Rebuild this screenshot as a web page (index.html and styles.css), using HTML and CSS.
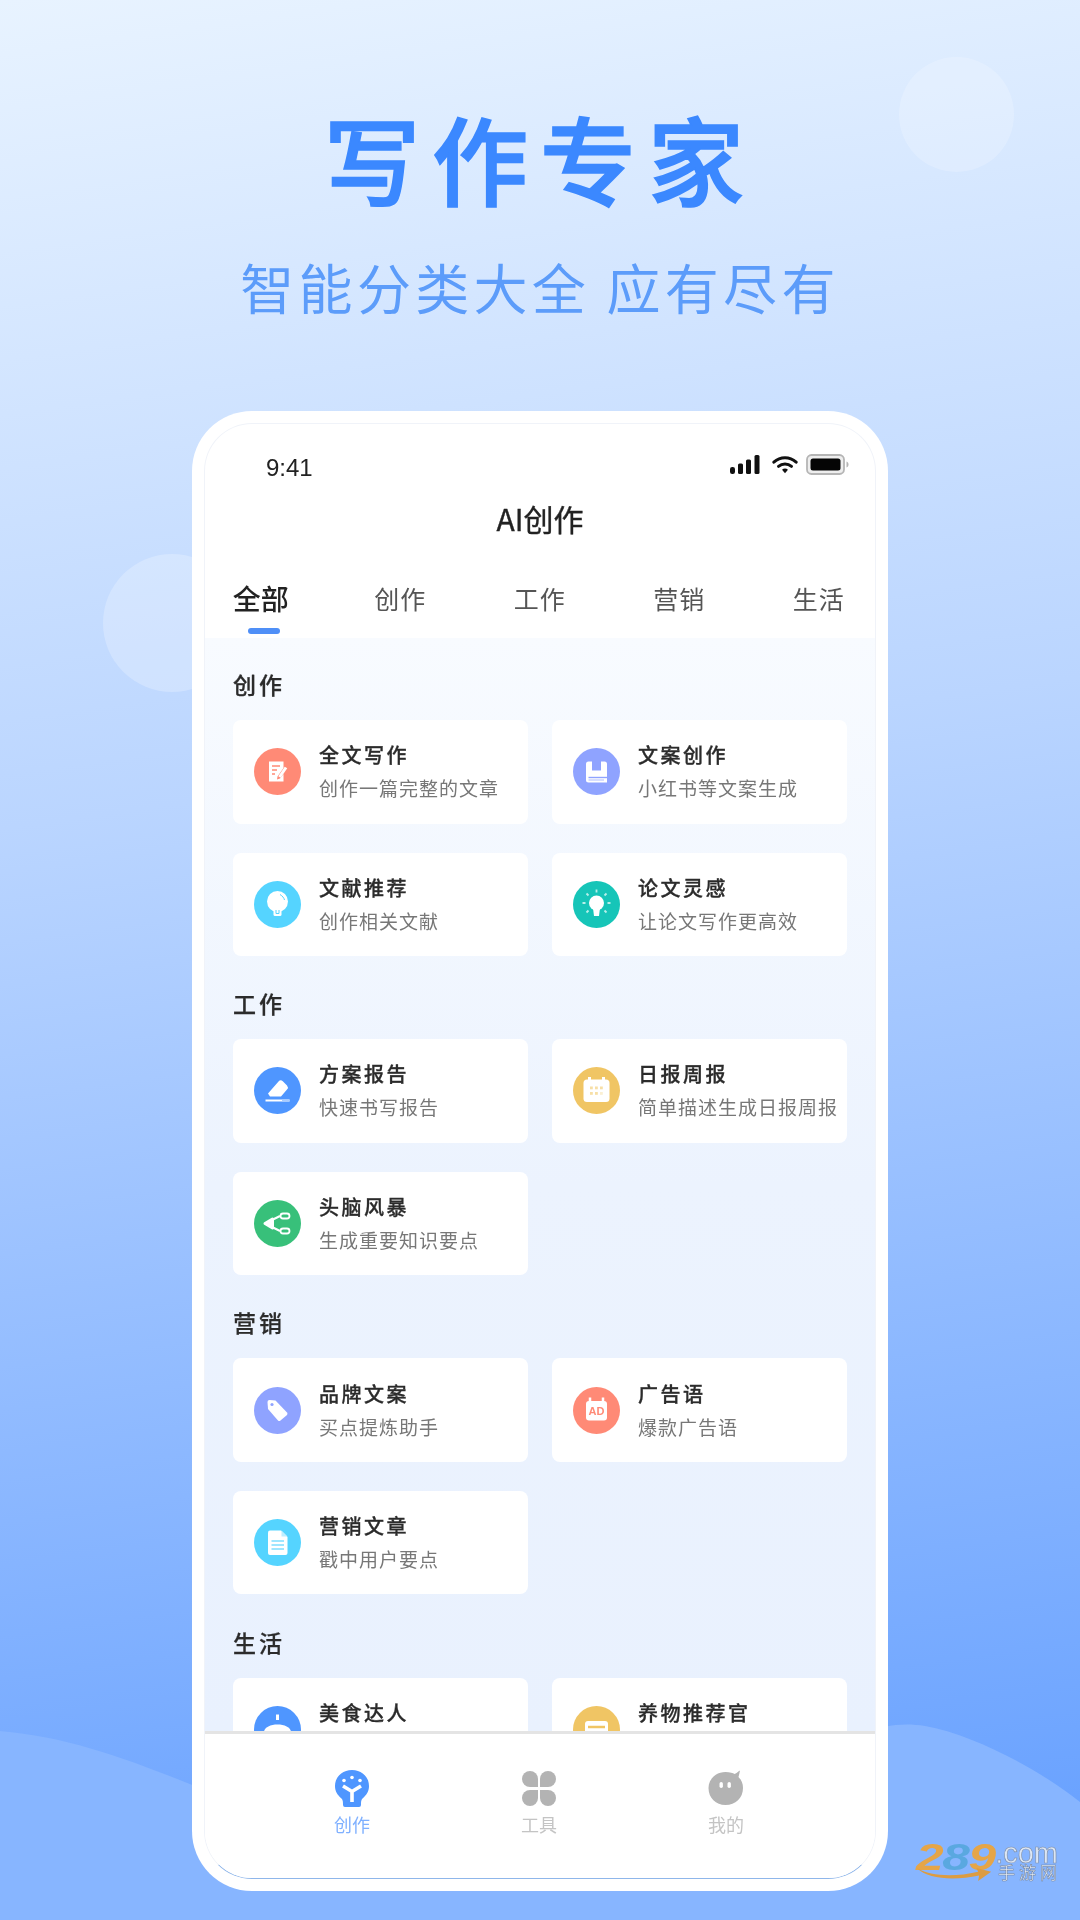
FILE: index.html
```html
<!DOCTYPE html>
<html lang="zh-CN">
<head>
<meta charset="utf-8">
<title>写作专家</title>
<link rel="stylesheet" href="styles.css">
</head>
<body>
<div class="page">
  <div class="blob blob-top"></div>
  <div class="blob blob-left"></div>
  <svg class="waves" viewBox="0 0 1080 200" aria-hidden="true">
    <path d="M0 11C70 17 130 40 200 68C400 130 700 110 860 15C885 4 905 3 925 6C975 15 1040 50 1080 82V200H0Z"/>
  </svg>

  <header class="hero">
    <h1 class="hero-title">写作专家</h1>
    <p class="hero-sub">智能分类大全 应有尽有</p>
  </header>

  <div class="phone">
    <div class="screen">
      <div class="status">
        <span class="clock">9:41</span>
        <div class="status-icons">
          <svg class="i-signal" viewBox="0 0 30 19"><rect x="0" y="12" width="5" height="7" rx="2.2"/><rect x="8" y="8.5" width="5" height="10.5" rx="1.5"/><rect x="16" y="4.5" width="5" height="14.5" rx="1.5"/><rect x="24.500" y="0" width="5" height="19" rx="1.5"/></svg>
          <svg class="i-wifi" viewBox="0 0 28 20"><path d="M2 7.500C9 1 19 1 26 7.500" fill="none" stroke="#111" stroke-width="3.200" stroke-linecap="round"/><path d="M7 12C11 8.500 17 8.500 21 12" fill="none" stroke="#111" stroke-width="3.200" stroke-linecap="round"/><path d="M10.800 15.600C12.700 14 15.300 14 17.200 15.600L14 19.400Z" fill="#111"/></svg>
          <svg class="i-battery" viewBox="0 0 43 21"><rect x="1" y="1" width="37" height="19" rx="4.500" fill="#eee" stroke="#b5b5b5" stroke-width="1.800"/><rect x="4.500" y="4.500" width="30" height="12" rx="2.500" fill="#050505"/><path d="M40.500 7.500C42 8 42.500 9.200 42.500 10.500C42.500 11.800 42 13 40.500 13.500Z" fill="#b5b5b5"/></svg>
        </div>
      </div>
      <div class="app-title">AI创作</div>
      <nav class="tabs">
        <div class="tab tab-active"><span>全部</span><i class="tab-bar"></i></div>
        <div class="tab"><span>创作</span></div>
        <div class="tab"><span>工作</span></div>
        <div class="tab"><span>营销</span></div>
        <div class="tab"><span>生活</span></div>
      </nav>

      <main class="list">
        <section class="group">
          <h2 class="group-title">创作</h2>
          <div class="cards">
            <article class="card">
              <svg class="ico" viewBox="0 0 47 47"><circle cx="23.500" cy="23.500" r="23.500" fill="#ff8a76"/><path d="M15 13.500H29.500V20L23.500 28.500L23 31.500L26 30.500L29.500 26V33.500H15Z" fill="#fff"/><path d="M18 18H26M18 22H23M18 26H21" stroke="#ff8a76" stroke-width="1.600"/><path d="M25.500 29L32 19.500" stroke="#fff" stroke-width="3"/></svg>
              <div class="card-text"><h3 class="card-title">全文写作</h3><p class="card-sub">创作一篇完整的文章</p></div>
            </article>
            <article class="card">
              <svg class="ico" viewBox="0 0 47 47"><circle cx="23.500" cy="23.500" r="23.500" fill="#8fa3ff"/><path d="M13 16A2.500 2.500 0 0 1 15.500 13.500H19V22.500H28V13.500H31.500A2.500 2.500 0 0 1 34 16V34.500H15.500A2.500 2.500 0 0 1 13 32Z" fill="#fff"/><path d="M15.500 29.500H34" stroke="#8fa3ff" stroke-width="1.400"/><path d="M15.500 32H31" stroke="#c6d0ff" stroke-width="1.400"/></svg>
              <div class="card-text"><h3 class="card-title">文案创作</h3><p class="card-sub">小红书等文案生成</p></div>
            </article>
            <article class="card">
              <svg class="ico" viewBox="0 0 47 47"><circle cx="23.500" cy="23.500" r="23.500" fill="#55d4ff"/><circle cx="23.500" cy="20.500" r="10.500" fill="#fff"/><path d="M19.500 28H27.500V33.500A1.500 1.500 0 0 1 26 35H21A1.500 1.500 0 0 1 19.500 33.500Z" fill="#fff"/><path d="M22 29V32.500H25V29" fill="none" stroke="#55d4ff" stroke-width="1"/><path d="M26 13.500C28.500 15 30 17 30.500 19" fill="none" stroke="#55d4ff" stroke-width="1"/></svg>
              <div class="card-text"><h3 class="card-title">文献推荐</h3><p class="card-sub">创作相关文献</p></div>
            </article>
            <article class="card">
              <svg class="ico" viewBox="0 0 47 47"><circle cx="23.500" cy="23.500" r="23.500" fill="#16c5b8"/><circle cx="23.500" cy="22" r="7.500" fill="#fff"/><path d="M20 27H27L26 35H21Z" fill="#fff"/><path d="M23.500 8.500V11.500M13.500 12.500L15.500 14.500M33.500 12.500L31.500 14.500M9.500 22H12.500M34.500 22H37.500M13.500 31.500L15.500 29.500M33.500 31.500L31.500 29.500" stroke="#b8efe9" stroke-width="1.800"/></svg>
              <div class="card-text"><h3 class="card-title">论文灵感</h3><p class="card-sub">让论文写作更高效</p></div>
            </article>
          </div>
        </section>

        <section class="group">
          <h2 class="group-title">工作</h2>
          <div class="cards">
            <article class="card">
              <svg class="ico" viewBox="0 0 47 47"><circle cx="23.500" cy="23.500" r="23.500" fill="#4f96ff"/><path d="M14 26.500L24.500 14.500A3 3 0 0 1 28.800 14.300L33 18.500A3 3 0 0 1 33 22.500L27 29.500H16Z" fill="#fff"/><path d="M11.500 33.500H35.500" stroke="#fff" stroke-width="2"/><path d="M28 33.500H35.500" stroke="#a9ccff" stroke-width="2"/></svg>
              <div class="card-text"><h3 class="card-title">方案报告</h3><p class="card-sub">快速书写报告</p></div>
            </article>
            <article class="card">
              <svg class="ico" viewBox="0 0 47 47"><circle cx="23.500" cy="23.500" r="23.500" fill="#f0c564"/><rect x="10.500" y="12.500" width="26" height="22.500" rx="3.500" fill="#fff"/><path d="M16.500 10V14.500M30.500 10V14.500" stroke="#fff" stroke-width="3"/><g fill="#f7dfa6"><rect x="17" y="19.500" width="2.800" height="2.800"/><rect x="22" y="19.500" width="2.800" height="2.800"/><rect x="27" y="19.500" width="2.800" height="2.800"/><rect x="17" y="25" width="2.800" height="2.800"/><rect x="22" y="25" width="2.800" height="2.800"/><rect x="27" y="25" width="2.800" height="2.800" opacity=".5"/></g></svg>
              <div class="card-text"><h3 class="card-title">日报周报</h3><p class="card-sub">简单描述生成日报周报</p></div>
            </article>
            <article class="card">
              <svg class="ico" viewBox="0 0 47 47"><circle cx="23.500" cy="23.500" r="23.500" fill="#38c07a"/><path d="M11 23.500L18.500 19V28Z" fill="#fff" stroke="#fff" stroke-width="3" stroke-linejoin="round"/><path d="M19 19.500L26 16M19 27.500L26 31" stroke="#fff" stroke-width="2"/><rect x="26.500" y="13.500" width="9" height="5" rx="2.500" fill="none" stroke="#fff" stroke-width="1.800"/><rect x="26.500" y="28.500" width="9" height="5" rx="2.500" fill="none" stroke="#fff" stroke-width="1.800"/></svg>
              <div class="card-text"><h3 class="card-title">头脑风暴</h3><p class="card-sub">生成重要知识要点</p></div>
            </article>
          </div>
        </section>

        <section class="group">
          <h2 class="group-title">营销</h2>
          <div class="cards">
            <article class="card">
              <svg class="ico" viewBox="0 0 47 47"><circle cx="23.500" cy="23.500" r="23.500" fill="#8fa3ff"/><path d="M13.500 15A2 2 0 0 1 15.500 13L21.500 13.500L33 25.500A2 2 0 0 1 33 28L26.500 33.500A2 2 0 0 1 24 33.500L14 22Z" fill="#fff"/><circle cx="18" cy="17.500" r="1.600" fill="#8fa3ff"/></svg>
              <div class="card-text"><h3 class="card-title">品牌文案</h3><p class="card-sub">买点提炼助手</p></div>
            </article>
            <article class="card">
              <svg class="ico" viewBox="0 0 47 47"><circle cx="23.500" cy="23.500" r="23.500" fill="#ff8a76"/><rect x="13" y="14" width="21" height="19.500" rx="3" fill="#fff"/><path d="M17 10.500V15M30 10.500V15" stroke="#fff" stroke-width="2.500"/><text x="23.500" y="28" text-anchor="middle" class="ad-text">AD</text></svg>
              <div class="card-text"><h3 class="card-title">广告语</h3><p class="card-sub">爆款广告语</p></div>
            </article>
            <article class="card">
              <svg class="ico" viewBox="0 0 47 47"><circle cx="23.500" cy="23.500" r="23.500" fill="#55d4ff"/><path d="M14 13.500A2 2 0 0 1 16 11.500H27L33.500 18V34A2 2 0 0 1 31.500 36H16A2 2 0 0 1 14 34Z" fill="#fff"/><path d="M27.500 11.500V17.500H33.500" fill="#bdeeff"/><path d="M17.500 22H30M17.500 26H30M17.500 30H30" stroke="#9fe6ff" stroke-width="1.800"/></svg>
              <div class="card-text"><h3 class="card-title">营销文章</h3><p class="card-sub">戳中用户要点</p></div>
            </article>
          </div>
        </section>

        <section class="group">
          <h2 class="group-title">生活</h2>
          <div class="cards">
            <article class="card">
              <svg class="ico" viewBox="0 0 47 47"><circle cx="23.500" cy="23.500" r="23.500" fill="#4f96ff"/><path d="M10 26C10.500 16 36.500 16 37 26V40H10Z" fill="#fff"/><path d="M22 8.500H25V14H22Z" fill="#fff"/></svg>
              <div class="card-text"><h3 class="card-title">美食达人</h3><p class="card-sub"></p></div>
            </article>
            <article class="card">
              <svg class="ico" viewBox="0 0 47 47"><circle cx="23.500" cy="23.500" r="23.500" fill="#f0c564"/><rect x="12" y="15" width="23" height="28" rx="3" fill="#fff"/><path d="M15 21H32" stroke="#f0c564" stroke-width="2.500"/></svg>
              <div class="card-text"><h3 class="card-title">养物推荐官</h3><p class="card-sub"></p></div>
            </article>
          </div>
        </section>
      </main>

      <nav class="bottom">
        <div class="bottom-item bottom-active">
          <svg class="bottom-ico" viewBox="0 0 36 38"><path d="M18 1C8 1 1 8 1 17C1 22.500 3.500 26 7.500 29.500C9 31 9 33 9 36A2 2 0 0 0 11 38H25A2 2 0 0 0 27 36C27 33 27 31 28.500 29.500C32.500 26 35 22.500 35 17C35 8 28 1 18 1Z" fill="#4f96ff"/><path d="M9 17L18 22.500L27 17M18 22V33" fill="none" stroke="#fff" stroke-width="3.600"/><circle cx="10" cy="11.500" r="1.800" fill="#fff"/><circle cx="18" cy="8.500" r="1.800" fill="#fff"/><circle cx="26" cy="11.500" r="1.800" fill="#fff"/></svg>
          <span>创作</span>
        </div>
        <div class="bottom-item">
          <svg class="bottom-ico" viewBox="0 0 36 38"><g fill="#b3b3b3"><path d="M17 18H9A8 8 0 1 1 17 10Z"/><path d="M19 18H27A8 8 0 1 0 19 10Z"/><path d="M17 21H9A8 8 0 1 0 17 29Z"/><path d="M19 21H27A8 8 0 1 1 19 29Z"/></g></svg>
          <span>工具</span>
        </div>
        <div class="bottom-item">
          <svg class="bottom-ico" viewBox="0 0 36 38"><path d="M17.500 3C22 3 25 4 26.500 5C28 4.500 29.500 3 32 1.500C31.500 4 31 6 30.500 8C33.500 11 35 14.500 35 19C35 29 27.500 36 17.500 36C8 36 0.500 29 0.500 19C0.500 10 8 3 17.500 3Z" fill="#b3b3b3"/><rect x="11.500" y="13" width="3.400" height="6" rx="1.700" fill="#fff"/><rect x="19.500" y="13" width="3.400" height="6" rx="1.700" fill="#fff"/></svg>
          <span>我的</span>
        </div>
      </nav>
    </div>
  </div>

  <div class="mark">
    <span class="mark-num">2<b>8</b>9</span>
    <div class="mark-side"><span class="mark-com">.com</span><span class="mark-cn">手游网</span></div>
    <svg class="mark-swoosh" viewBox="0 0 80 14"><path d="M0 0C15 9 40 10 66 4L64 0L80 4L66 14L67 8C40 14 12 12 0 0Z"/></svg>
  </div>
</div>
</body>
</html>
```

FILE: styles.css
```css
* { box-sizing: border-box; }

html, body {
  margin: 0;
  padding: 0;
}

body {
  font-family: "Noto Sans CJK SC", "Noto Sans", sans-serif;
  color: #333;
}

.page {
  position: relative;
  width: 1080px;
  height: 1920px;
  overflow: hidden;
  background: linear-gradient(172deg, #e8f3ff 0%, #bad5ff 40%, #6ba3ff 94%);
}

/* decoration */
.blob {
  position: absolute;
  border-radius: 50%;
  background: rgba(255, 255, 255, 0.2);
}

.blob-top {
  top: 57px;
  left: 899px;
  width: 115px;
  height: 115px;
}

.blob-left {
  top: 554px;
  left: 103px;
  width: 138px;
  height: 138px;
  background: rgba(255, 255, 255, 0.24);
}

.waves {
  position: absolute;
  left: 0;
  top: 1720px;
  width: 1080px;
  height: 200px;
  fill: #87b5ff;
}

/* hero */
.hero {
  position: relative;
  padding-top: 102px;
  text-align: center;
  filter: blur(0.7px);
}

.hero-title {
  margin: 0;
  font-size: 96px;
  line-height: 110px;
  font-weight: 500;
  letter-spacing: 12px;
  color: #3b88ff;
  -webkit-text-stroke: 1.6px #3b88ff;
}

.hero-sub {
  margin: 43px 0 0;
  font-size: 54px;
  line-height: 64px;
  font-weight: 400;
  letter-spacing: 4.3px;
  color: #5c9cfa;
}

/* phone */
.phone {
  position: relative;
  width: 696px;
  height: 1480px;
  margin: 92px auto 0;
  padding: 12px;
  border-radius: 60px;
  background: #fff;
}

.screen {
  display: flex;
  flex-direction: column;
  height: 1456px;
  overflow: hidden;
  border: 1px solid #f0f3f9;
  border-bottom-color: #8fb6ea;
  border-radius: 48px;
  background: #fff;
}

.status {
  display: flex;
  align-items: center;
  justify-content: space-between;
  height: 30px;
  margin-top: 29px;
  padding: 0 26px 0 61px;
  flex: none;
  filter: blur(0.5px);
}

.clock {
  font-family: "Liberation Sans", sans-serif;
  font-size: 24px;
  line-height: 30px;
  color: #222;
}

.status-icons {
  display: flex;
  align-items: center;
  gap: 8px;
  margin-top: -7px;
}

.i-signal { width: 30px; height: 19px; fill: #111; margin-right: 4px; }
.i-wifi { width: 26px; height: 19px; }
.i-battery { width: 43px; height: 21px; }

.app-title {
  flex: none;
  margin-top: 15px;
  font-size: 30px;
  line-height: 40px;
  font-weight: 400;
  text-align: center;
  color: #222;
  -webkit-text-stroke: 0.35px #222;
  filter: blur(0.5px);
}

.tabs {
  flex: none;
  display: grid;
  grid-template-columns: repeat(5, 139.5px);
  margin-top: 40px;
  margin-left: -14px;
  height: 60px;
  filter: blur(0.5px);
}

.tab {
  display: flex;
  flex-direction: column;
  align-items: center;
  font-size: 25px;
  line-height: 40px;
  letter-spacing: 1px;
  color: #555;
}

.tab-active {
  font-size: 28px;
  font-weight: 500;
  letter-spacing: 0;
  color: #222;
}

.tab-bar {
  display: block;
  width: 32px;
  height: 6px;
  margin: 10px 0 0 6px;
  border-radius: 3px;
  background: #4f8ff7;
}

/* list */
.list {
  flex: 1;
  min-height: 0;
  overflow: hidden;
  display: flex;
  flex-direction: column;
  gap: 32.2px;
  padding: 31px 28px 0;
  background: linear-gradient(180deg, #f8fbff 0%, #ecf3fe 50%, #e9f1fe 100%);
}

.group { flex: none; }

.group-title {
  margin: 0 0 21px;
  font-size: 23px;
  line-height: 30px;
  font-weight: 500;
  letter-spacing: 3px;
  color: #2b2b2b;
  -webkit-text-stroke: 0.25px #2b2b2b;
  filter: blur(0.5px);
}

.cards {
  display: grid;
  grid-template-columns: 295px 295px;
  column-gap: 24px;
  row-gap: 29px;
}

.card {
  display: flex;
  align-items: center;
  gap: 18px;
  height: 103.5px;
  padding-left: 21px;
  border-radius: 8px;
  background: #fff;
}

.ico {
  flex: none;
  width: 47px;
  height: 47px;
  filter: blur(0.5px);
}

.card-text {
  display: flex;
  flex-direction: column;
  gap: 5px;
  min-width: 0;
  filter: blur(0.5px);
}

.card-title {
  margin: 0;
  font-size: 20px;
  line-height: 28px;
  font-weight: 500;
  letter-spacing: 2.5px;
  color: #2b2b2b;
  -webkit-text-stroke: 0.3px #2b2b2b;
  white-space: nowrap;
}

.card-sub {
  margin: 0;
  height: 28px;
  font-size: 19px;
  line-height: 28px;
  letter-spacing: 1px;
  color: #777;
  white-space: nowrap;
}

.ad-text {
  font-family: "Liberation Sans", sans-serif;
  font-size: 11px;
  font-weight: 700;
  fill: #ff8a76;
}

/* bottom nav */
.bottom {
  flex: none;
  display: flex;
  justify-content: center;
  height: 147px;
  padding: 35px 2px 0 0;
  border-top: 3px solid #e4e4e4;
  background: #fff;
}

.bottom-item {
  display: flex;
  flex-direction: column;
  align-items: center;
  gap: 6px;
  width: 187px;
  font-size: 18px;
  line-height: 22px;
  color: #c4c4c4;
  filter: blur(0.5px);
}

.bottom-active { color: #7fb0ff; }

.bottom-ico {
  display: block;
  width: 36px;
  height: 38px;
}

/* watermark */
.mark {
  position: absolute;
  top: 1843px;
  left: 916px;
  display: flex;
  width: 142px;
  height: 40px;
  filter: blur(0.4px);
}

.mark-num {
  display: block;
  width: 80px;
  transform: scaleX(1.38);
  transform-origin: left top;
  font-family: "Liberation Sans", sans-serif;
  font-size: 36px;
  line-height: 30px;
  font-weight: 700;
  font-style: italic;
  letter-spacing: -1px;
  color: #e5a548;
}

.mark-num b { color: #5aa8e0; }

.mark-side {
  display: flex;
  flex-direction: column;
  align-items: flex-end;
}

.mark-com {
  font-family: "Liberation Sans", sans-serif;
  font-size: 29px;
  line-height: 20px;
  color: #dce6f4;
  -webkit-text-stroke: 0.6px #7f8ea6;
}

.mark-cn {
  font-size: 17px;
  line-height: 18px;
  letter-spacing: 4px;
  margin-right: -3px;
  color: #e6edf8;
  -webkit-text-stroke: 0.5px #6f7f98;
}

.mark-swoosh {
  position: absolute;
  left: 0;
  top: 25px;
  width: 76px;
  height: 13px;
  fill: #dc9c42;
}
```
